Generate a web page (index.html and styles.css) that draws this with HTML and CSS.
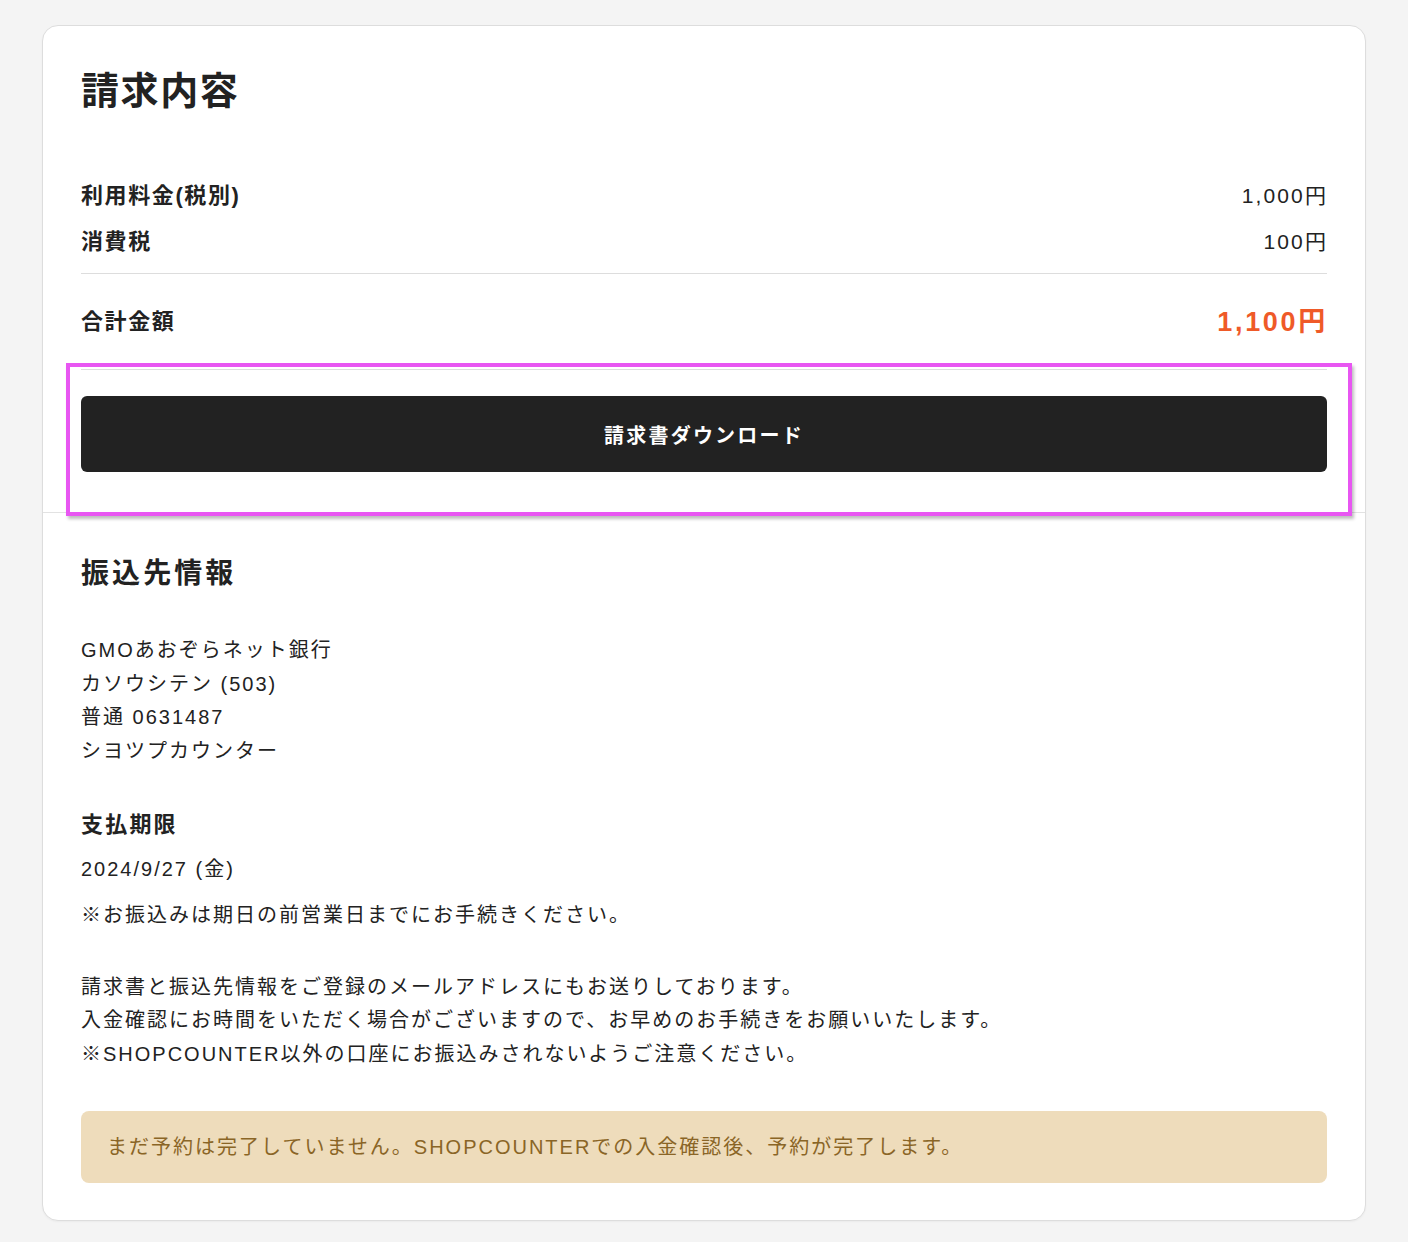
FILE: index.html
```html
<!DOCTYPE html>
<html lang="ja">
<head>
<meta charset="utf-8">
<title>請求内容</title>
<link rel="stylesheet" href="styles.css">
</head>
<body>
<main class="card">
  <section class="section section-bill">
    <h1 class="title">請求内容</h1>
    <div class="rows">
      <div class="row">
        <span class="label">利用料金(税別)</span>
        <span class="value">1,000円</span>
      </div>
      <div class="row">
        <span class="label">消費税</span>
        <span class="value">100円</span>
      </div>
    </div>
    <div class="total">
      <span class="label">合計金額</span>
      <span class="total-value">1,100円</span>
    </div>
    <div class="action">
      <button class="download" type="button">請求書ダウンロード</button>
    </div>
    <div class="highlight" aria-hidden="true"></div>
  </section>
  <section class="section section-bank">
    <h2 class="subtitle">振込先情報</h2>
    <p class="lines">GMOあおぞらネット銀行<br>カソウシテン (503)<br>普通 0631487<br>シヨツプカウンター</p>
    <h3 class="label deadline-label">支払期限</h3>
    <p class="lines date">2024/9/27 (金)</p>
    <p class="lines note">※お振込みは期日の前営業日までにお手続きください。</p>
    <p class="lines notice">請求書と振込先情報をご登録のメールアドレスにもお送りしております。<br>入金確認にお時間をいただく場合がございますので、お早めのお手続きをお願いいたします。<br>※SHOPCOUNTER以外の口座にお振込みされないようご注意ください。</p>
    <div class="banner">まだ予約は完了していません。SHOPCOUNTERでの入金確認後、予約が完了します。</div>
  </section>
</main>
</body>
</html>
```

FILE: styles.css
```css
html, body {
  margin: 0;
  padding: 0;
  background: #f4f4f4;
}

body {
  padding: 25px 42px 21px;
  font-family: "Liberation Sans", "Noto Sans CJK JP", sans-serif;
  color: #222222;
  letter-spacing: 0.1em;
}

.card {
  background: #ffffff;
  border: 1px solid #dddddd;
  border-radius: 16px;
  box-shadow: 0 1px 2px rgba(0, 0, 0, 0.04);
}

.section {
  padding: 40px 38px;
}

.section-bill {
  position: relative;
  border-bottom: 1px solid #e2e2e2;
}

.title {
  margin: 0;
  font-size: 38px;
  line-height: 50px;
  font-weight: 700;
}

.rows {
  margin-top: 63px;
  display: flex;
  flex-direction: column;
  gap: 12px;
  padding-bottom: 14px;
  border-bottom: 1px solid #dddddd;
}

.row {
  display: flex;
  justify-content: space-between;
  align-items: center;
  height: 34px;
}

.label {
  font-size: 22px;
  font-weight: 700;
  line-height: 34px;
  margin: 0;
}

.value {
  font-size: 21px;
  line-height: 34px;
  letter-spacing: 0.1em;
  margin-right: -1px;
}

.total {
  display: flex;
  justify-content: space-between;
  align-items: center;
  height: 40px;
  padding: 28px 0 27px;
  border-bottom: 1px solid #dddddd;
}

.total-value {
  font-size: 27px;
  line-height: 34px;
  font-weight: 700;
  color: #ef5a28;
  letter-spacing: 0.1em;
  margin-right: -1px;
  margin-top: 0;
}

.action {
  padding-top: 26px;
}

.download {
  display: flex;
  align-items: center;
  justify-content: center;
  width: 100%;
  height: 76px;
  border: none;
  border-radius: 6px;
  background: #222222;
  color: #ffffff;
  font-family: inherit;
  font-size: 20px;
  font-weight: 700;
  letter-spacing: 0.11em;
  cursor: pointer;
}

.highlight {
  position: absolute;
  left: 23px;
  top: 337px;
  width: 1286px;
  height: 153px;
  box-sizing: border-box;
  border: 4px solid #e856f2;
  box-shadow: 2px 3px 3px rgba(0, 0, 0, 0.25);
  pointer-events: none;
}

.section-bank {
  padding-top: 41px;
  padding-bottom: 37px;
  letter-spacing: 0.125em;
}

.subtitle {
  margin: 0;
  font-size: 28px;
  line-height: 40px;
  font-weight: 700;
  letter-spacing: 0.11em;
}

.section-bank .label {
  letter-spacing: 0.1em;
}

.lines {
  margin: 0;
  font-size: 20px;
  line-height: 33.6px;
}

.subtitle + .lines {
  margin-top: 40px;
}

.deadline-label {
  margin-top: 40px;
}

.date {
  margin-top: 11px;
}

.note {
  margin-top: 12px;
}

.notice {
  margin-top: 38px;
}

.banner {
  margin-top: 40px;
  background: #eedcbb;
  color: #8a6526;
  border-radius: 8px;
  padding: 19px 26px;
  font-size: 20px;
  line-height: 34px;
}
```
